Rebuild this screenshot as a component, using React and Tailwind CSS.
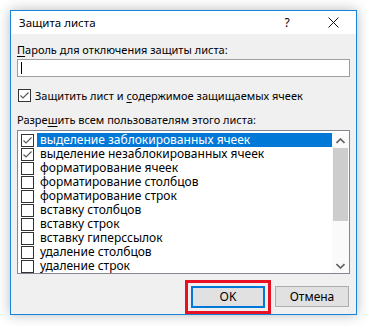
import { useState } from "react";

const items = [
  { label: "выделение заблокированных ячеек", checked: true },
  { label: "выделение незаблокированных ячеек", checked: true },
  { label: "форматирование ячеек", checked: false },
  { label: "форматирование столбцов", checked: false },
  { label: "форматирование строк", checked: false },
  { label: "вставку столбцов", checked: false },
  { label: "вставку строк", checked: false },
  { label: "вставку гиперссылок", checked: false },
  { label: "удаление столбцов", checked: false },
  { label: "удаление строк", checked: false },
];

function CheckBox({ checked }) {
  return (
    <span className="flex h-[13px] w-[13px] shrink-0 items-center justify-center border border-[#333333] bg-white">
      {checked ? (
        <svg width="11" height="11" viewBox="0 0 11 11" fill="none">
          <path d="M1.5 5.5 L4 8 L9.5 2.5" stroke="#555555" strokeWidth="1.1" />
        </svg>
      ) : null}
    </span>
  );
}

export default function App() {
  const [protect, setProtect] = useState(true);
  const [rows, setRows] = useState(items);

  function toggle(index) {
    setRows((prev) =>
      prev.map((row, i) => (i === index ? { ...row, checked: !row.checked } : row))
    );
  }

  return (
    <div
      className="h-[326px] w-[367px] overflow-hidden bg-white pl-[10px] pt-[10px] text-[11px] text-black"
      style={{ fontFamily: '"Noto Sans", "Open Sans", sans-serif' }}
    >
      <div className="flex h-[305px] w-[347px] flex-col border border-[#1883d7] bg-[#f0f0f0] shadow-[0_0_12px_rgba(0,0,0,0.28)]">
        <div className="flex h-[27px] items-center bg-white pl-[8px] text-[11.5px]">
          <span className="flex-1 leading-none">Защита листа</span>
          <span className="w-[20px] text-center text-[12px] leading-none">?</span>
          <span className="ml-[26px] mr-[13px] flex w-[20px] justify-center">
            <svg width="11" height="11" viewBox="0 0 11 11">
              <path d="M0.5 0.5 L10.5 10.5 M10.5 0.5 L0.5 10.5" stroke="#111" strokeWidth="1" />
            </svg>
          </span>
        </div>

        <div className="flex flex-1 flex-col px-[6px]">
          <p className="mt-[8px] h-[16px] leading-[16px]">
            <span className="underline underline-offset-2">П</span>ароль для отключения защиты листа:
          </p>
          <div className="mt-[1px] flex h-[18px] items-center border border-[#a0a0a0] bg-white pl-[3px]">
            <span className="h-[12px] w-px bg-black" />
          </div>

          <label className="mt-[11px] flex h-[15px] items-center gap-[4px] pl-px" onClick={() => setProtect(!protect)}>
            <CheckBox checked={protect} />
            <span className="leading-none">
              Защитить лист и <span className="underline underline-offset-2">с</span>одержимое защищаемых ячеек
            </span>
          </label>

          <p className="mt-[9px] h-[16px] leading-[16px]">
            Разре<span className="underline underline-offset-2">ш</span>ить всем пользователям этого листа:
          </p>

          <div className="mt-[2px] flex h-[144px] border border-[#828790] bg-white pt-[2px] text-[12px]">
            <ul className="flex-1">
              {rows.map((row, index) => (
                <li
                  key={row.label}
                  className="flex h-[14px] items-center pl-[3px]"
                  onClick={() => toggle(index)}
                >
                  <CheckBox checked={row.checked} />
                  <span
                    className={`ml-[3px] flex h-[14px] flex-1 items-center pl-[3px] leading-none ${
                      index === 0 ? "bg-[#0078d7] text-white" : ""
                    }`}
                  >
                    {row.label}
                  </span>
                </li>
              ))}
            </ul>
            <div className="flex w-[17px] flex-col bg-[#fafafa]">
              <div className="flex h-[15px] items-center justify-center">
                <svg width="9" height="6" viewBox="0 0 9 6">
                  <path d="M0.5 5 L4.5 1 L8.5 5" stroke="#606060" strokeWidth="1.6" fill="none" />
                </svg>
              </div>
              <div className="mx-px h-[73px] bg-[#cdcdcd]" />
              <div className="flex-1" />
              <div className="flex h-[15px] items-center justify-center">
                <svg width="9" height="6" viewBox="0 0 9 6">
                  <path d="M0.5 1 L4.5 5 L8.5 1" stroke="#606060" strokeWidth="1.6" fill="none" />
                </svg>
              </div>
            </div>
          </div>

          <div className="mt-[6px] flex items-start justify-end gap-[4px] pr-px text-[12px]">
            <div className="border-[3px] border-[#e81123] p-[3px]">
              <button className="flex h-[22px] w-[74px] items-center justify-center border-2 border-[#0078d7] bg-[#e1e1e1]">
                OK
              </button>
            </div>
            <button className="mt-[6px] flex h-[21px] w-[74px] items-center justify-center border border-[#adadad] bg-[#e1e1e1]">
              Отмена
            </button>
          </div>
        </div>
      </div>
    </div>
  );
}
